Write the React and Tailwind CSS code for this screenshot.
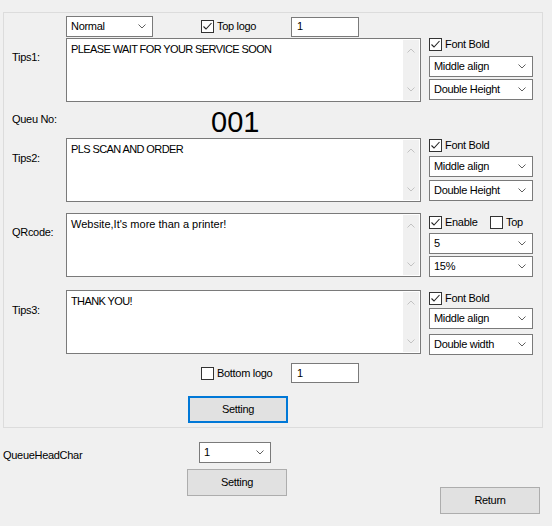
const Chevron = ({ className = '' }) => (
  <svg width="8" height="5" viewBox="0 0 8 5" className={className}>
    <path d="M0.5 0.5 L4 4 L7.5 0.5" fill="none" stroke="currentColor" strokeWidth="1" />
  </svg>
)

const UpChevron = () => (
  <svg width="8" height="5" viewBox="0 0 8 5">
    <path d="M0.5 4.5 L4 1 L7.5 4.5" fill="none" stroke="#c2c2c2" strokeWidth="1" />
  </svg>
)

const Select = ({ value, className = '' }) => (
  <div className={`flex h-[21px] items-center justify-between border border-[#7a7a7a] bg-white pl-[4px] pr-[6px] ${className}`}>
    <span className="leading-none">{value}</span>
    <Chevron className="text-[#606060]" />
  </div>
)

const Check = ({ checked, label, className = '' }) => (
  <div className={`flex items-center gap-[3px] ${className}`}>
    <div className="flex h-[13px] w-[13px] items-center justify-center border border-[#333] bg-white">
      {checked ? (
        <svg width="11" height="11" viewBox="0 0 11 11">
          <path d="M1.5 5.5 L4 8 L9.5 2" fill="none" stroke="#222" strokeWidth="1.1" />
        </svg>
      ) : null}
    </div>
    <span className="leading-[13px]">{label}</span>
  </div>
)

// uppercase text in the reference font runs narrower, lowercase a bit wider
const Memo = ({ text, caps }) => (
  <div className="flex h-[64px] w-[355px] border border-[#7a7a7a] bg-white p-[1px]">
    <div
      className={`flex-1 pl-[3px] pt-[3px] leading-[13px] ${caps ? 'tracking-[-0.6px]' : 'tracking-normal'}`}
    >
      {text}
    </div>
    <div className="flex w-[16px] flex-col items-center justify-between bg-[#f0f0f0] py-[8px]">
      <UpChevron />
      <Chevron className="text-[#c2c2c2]" />
    </div>
  </div>
)

const Input = ({ value }) => (
  <div className="flex h-[20px] w-[68px] items-center border border-[#7a7a7a] bg-white pl-[5px] leading-none">
    {value}
  </div>
)

const Button = ({ label, focused, className = '' }) => (
  <div
    className={`flex h-[27px] w-[100px] items-center justify-center bg-[#e1e1e1] ${
      focused ? 'border-2 border-[#0078d7]' : 'border border-[#adadad]'
    } ${className}`}
  >
    {label}
  </div>
)

const Label = ({ children, className = '' }) => (
  <div className={`w-[54px] shrink-0 leading-[13px] ${className}`}>{children}</div>
)

const Row = ({ label, text, caps, labelPad = 'pt-[13px]', children, className = '' }) => (
  <div className={`flex ${className}`}>
    <Label className={labelPad}>{label}</Label>
    <Memo text={text} caps={caps} />
    <div className="ml-[8px] flex w-[104px] flex-col">{children}</div>
  </div>
)

export default function App() {
  return (
    <div className="h-[526px] w-[552px] overflow-hidden bg-[#f0f0f0] font-['Liberation_Sans',Arial,sans-serif] text-[11px] tracking-[-0.3px] text-black">
      <div className="ml-[3px] mt-[12px] h-[416px] w-[540px] border border-[#dcdcdc] pl-[8px] pt-[3px]">
        <div className="flex h-[21px] items-center">
          <div className="w-[54px]" />
          <Select value="Normal" className="w-[87px]" />
          <Check checked label="Top logo" className="ml-[48px] w-[90px]" />
          <Input value="1" />
        </div>

        <Row label="Tips1:" text="PLEASE WAIT FOR YOUR SERVICE SOON" caps className="mt-[1px]">
          <Check checked label="Font Bold" />
          <Select value="Middle align" className="mt-[5px]" />
          <Select value="Double Height" className="mt-[2px]" />
        </Row>

        <div className="flex h-[36px] items-center">
          <Label className="-mt-[2px]">Queu No:</Label>
          <div className="ml-[145px] mt-[5px] text-[29px] leading-[29px] tracking-normal">001</div>
        </div>

        <Row label="Tips2:" text="PLS SCAN AND ORDER" caps labelPad="pt-[14px]">
          <Check checked label="Font Bold" className="mt-[1px]" />
          <Select value="Middle align" className="mt-[4px]" />
          <Select value="Double Height" className="mt-[3px]" />
        </Row>

        <Row label="QRcode:" text="Website,It's more than a printer!" className="mt-[11px]">
          <div className="mt-[3px] flex">
            <Check checked label="Enable" className="w-[61px]" />
            <Check label="Top" />
          </div>
          <Select value="5" className="mt-[4px]" />
          <Select value="15%" className="mt-[2px]" />
        </Row>

        <Row label="Tips3:" text="THANK YOU!" caps labelPad="pt-[14px]" className="mt-[13px]">
          <Check checked label="Font Bold" className="mt-[2px]" />
          <Select value="Middle align" className="mt-[3px]" />
          <Select value="Double width" className="mt-[5px]" />
        </Row>

        <div className="mt-[8px] flex h-[20px] items-center">
          <Check label="Bottom logo" className="ml-[189px] w-[90px]" />
          <Input value="1" />
        </div>

        <Button label="Setting" focused className="ml-[176px] mt-[13px]" />
      </div>

      <div className="ml-[3px] mt-[14px] flex h-[21px] items-center">
        <div className="mt-[5px] w-[196px]">QueueHeadChar</div>
        <Select value="1" className="w-[72px]" />
      </div>

      <div className="mt-[6px] flex">
        <Button label="Setting" className="ml-[187px]" />
        <Button label="Return" className="ml-[153px] mt-[18px]" />
      </div>
    </div>
  )
}
